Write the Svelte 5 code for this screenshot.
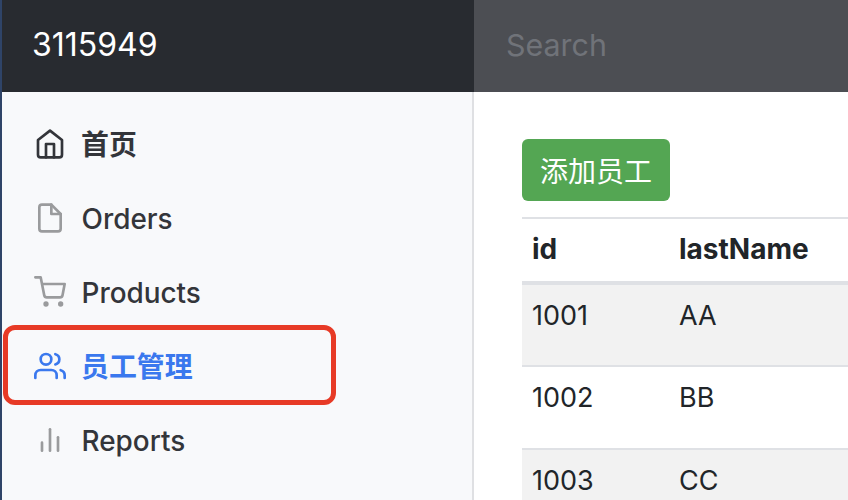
<script>
    const navItems = [
        { label: "首页", icon: "home", cjk: true },
        { label: "Orders", icon: "file" },
        { label: "Products", icon: "cart" },
        { label: "员工管理", icon: "users", active: true, cjk: true },
        { label: "Reports", icon: "chart" },
    ];

    const employees = [
        { id: 1001, lastName: "AA" },
        { id: 1002, lastName: "BB" },
        { id: 1003, lastName: "CC" },
    ];
</script>

<div class="page">
    <header class="navbar">
        <div class="brand">3115949</div>
        <div class="search">Search</div>
    </header>

    <div class="body">
        <nav class="sidebar">
            {#each navItems as item}
                <div class="nav-item" class:active={item.active}>
                    <svg class="icon {item.icon}" viewBox="0 0 24 24" fill="none" stroke="currentColor" stroke-width="2" stroke-linecap="round" stroke-linejoin="round">
                        {#if item.icon === "home"}
                            <path d="M3 9l9-7 9 7v11a2 2 0 0 1-2 2H5a2 2 0 0 1-2-2z" />
                            <polyline points="9 22 9 12 15 12 15 22" />
                        {:else if item.icon === "file"}
                            <path d="M13 2H6a2 2 0 0 0-2 2v16a2 2 0 0 0 2 2h12a2 2 0 0 0 2-2V9z" />
                            <polyline points="13 2 13 9 20 9" />
                        {:else if item.icon === "cart"}
                            <circle cx="9" cy="21" r="1" />
                            <circle cx="20" cy="21" r="1" />
                            <path d="M1 1h4l2.68 13.39a2 2 0 0 0 2 1.61h9.72a2 2 0 0 0 2-1.61L23 6H6" />
                        {:else if item.icon === "users"}
                            <path d="M17 21v-2a4 4 0 0 0-4-4H5a4 4 0 0 0-4 4v2" />
                            <circle cx="9" cy="7" r="4" />
                            <path d="M23 21v-2a4 4 0 0 0-3-3.87" />
                            <path d="M16 3.13a4 4 0 0 1 0 7.75" />
                        {:else}
                            <line x1="18" y1="20" x2="18" y2="10" />
                            <line x1="12" y1="20" x2="12" y2="4" />
                            <line x1="6" y1="20" x2="6" y2="14" />
                        {/if}
                    </svg>
                    <span class:cjk={item.cjk}>{item.label}</span>
                </div>
            {/each}
        </nav>

        <main class="content">
            <button class="add-btn">添加员工</button>
            <table>
                <thead>
                    <tr>
                        <th class="col-id">id</th>
                        <th>lastName</th>
                    </tr>
                </thead>
                <tbody>
                    {#each employees as emp}
                        <tr>
                            <td>{emp.id}</td>
                            <td>{emp.lastName}</td>
                        </tr>
                    {/each}
                </tbody>
            </table>
        </main>
    </div>

    <div class="annotation"></div>
</div>

<style>
    :global(body) {
        margin: 0;
        background: #fff;
    }

    .page {
        position: relative;
        width: 848px;
        height: 500px;
        overflow: hidden;
        box-sizing: border-box;
        border-left: 2px solid #2f4468;
        font-family: Inter, "Noto Sans CJK SC", sans-serif;
        color: #212529;
    }

    .navbar {
        display: flex;
        height: 92px;
        background: #282b30;
    }

    .brand {
        width: 472px;
        box-sizing: border-box;
        padding: 24px 0 0 30px;
        color: #fff;
        font-size: 32px;
        line-height: 42px;
    }

    .search {
        flex: 1;
        padding: 24px 0 0 32px;
        background: #4c4e53;
        color: #707379;
        font-size: 30.4px;
        line-height: 42px;
    }

    .body {
        display: flex;
        height: 408px;
    }

    .sidebar {
        width: 472px;
        box-sizing: border-box;
        padding-top: 15px;
        background: #f8f9fb;
        border-right: 2px solid #dfe0e3;
    }

    .nav-item {
        display: flex;
        align-items: center;
        height: 74px;
        padding-left: 32px;
        font-size: 27.9px;
        font-weight: 500;
        color: #33353a;
    }

    .nav-item span {
        margin-left: 15.5px;
        position: relative;
        top: 1px;
    }

    .nav-item span.cjk {
        top: -1px;
        margin-left: 15px;
        font-weight: 600;
    }

    .icon {
        width: 32px;
        height: 32px;
        flex: none;
        color: #9a9b9d;
    }

    .icon.home {
        color: #33353a;
    }

    .nav-item.active,
    .nav-item.active .icon {
        color: #3a78ee;
    }

    .content {
        flex: 1;
        padding: 47px 0 0 48px;
        min-width: 0;
    }

    .add-btn {
        display: block;
        width: 148px;
        height: 62px;
        padding: 0;
        border: none;
        border-radius: 6px;
        background: #54a653;
        color: #fff;
        font-family: inherit;
        font-size: 28px;
    }

    table {
        width: 100%;
        margin-top: 16px;
        border-collapse: collapse;
        table-layout: fixed;
        font-size: 27px;
        border-top: 2px solid #dfe1e5;
    }

    th {
        height: 65px;
        padding: 0 10px 2px;
        box-sizing: border-box;
        text-align: left;
        font-size: 28px;
        font-weight: 700;
        border-bottom: 4px solid #dfe1e5;
    }

    .col-id {
        width: 147px;
    }

    td {
        height: 83px;
        padding: 13px 10px 0;
        box-sizing: border-box;
        vertical-align: top;
        line-height: 36px;
        border-bottom: 2px solid #dfe1e5;
    }

    tbody tr:nth-child(odd) {
        background: #f2f2f2;
    }

    .annotation {
        position: absolute;
        left: 1px;
        top: 325px;
        width: 333px;
        height: 80px;
        box-sizing: border-box;
        border: 5px solid #e73a26;
        border-radius: 12px;
    }
</style>
